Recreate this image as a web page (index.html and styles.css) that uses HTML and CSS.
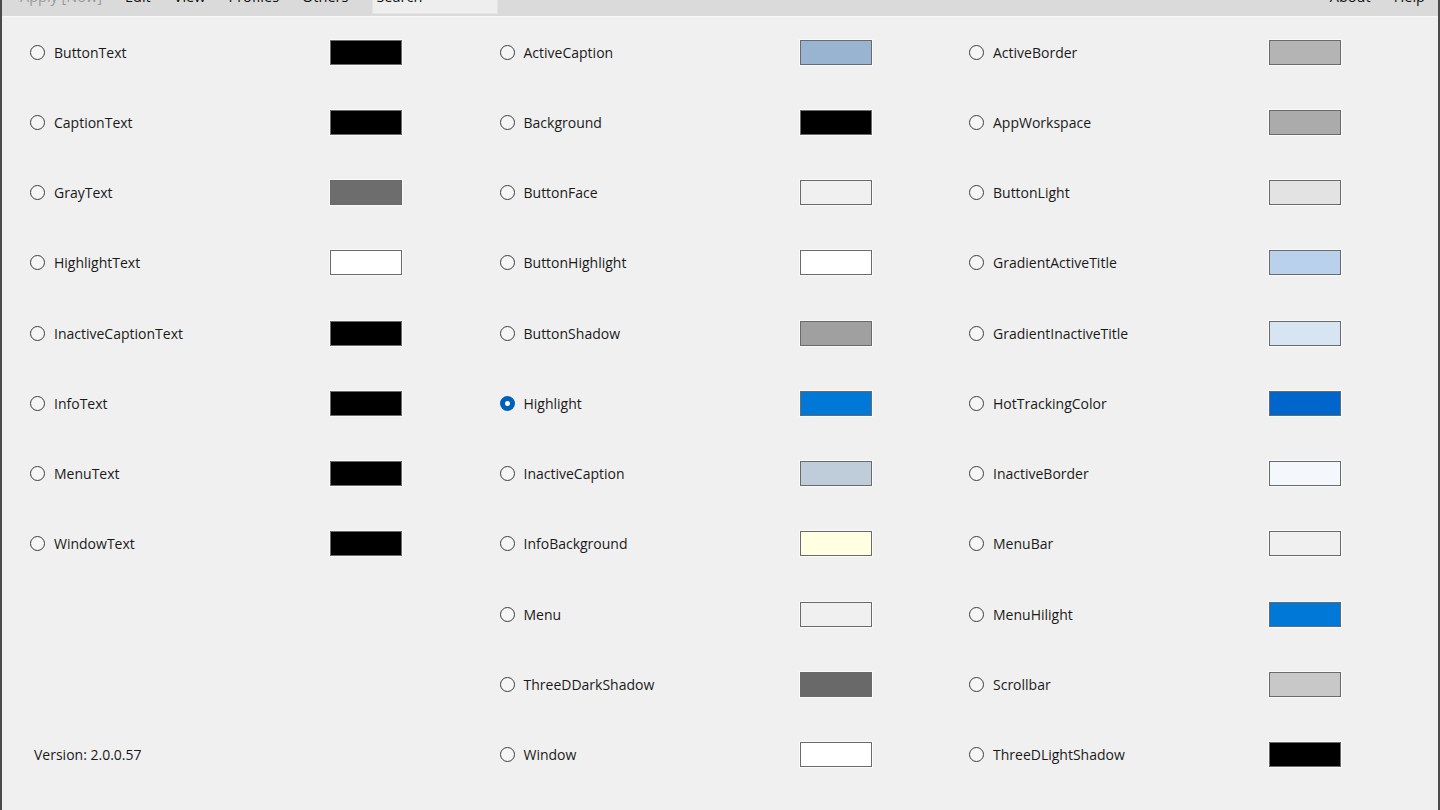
FILE: index.html
```html
<!DOCTYPE html>
<html lang="en">
<head>
    <meta charset="UTF-8">
    <title>System Colors</title>
    <link rel="stylesheet" href="styles.css">
</head>
<body>
    <div class="window">
        <div class="menubar">
            <div class="menu-item disabled">Apply [Now]</div>
            <div class="menu-item">Edit</div>
            <div class="menu-item">View</div>
            <div class="menu-item">Profiles</div>
            <div class="menu-item">Others</div>
            <div class="search"><span class="search-text">Search</span></div>
            <div class="menu-spacer"></div>
            <div class="menu-item">About</div>
            <div class="menu-item last">Help</div>
        </div>

        <div class="columns">
            <div class="column">
                <label class="row"><span class="radio"></span><span class="name">ButtonText</span><span class="swatch" style="background:#000000"></span></label>
                <label class="row"><span class="radio"></span><span class="name">CaptionText</span><span class="swatch" style="background:#000000"></span></label>
                <label class="row"><span class="radio"></span><span class="name">GrayText</span><span class="swatch" style="background:#6d6d6d"></span></label>
                <label class="row"><span class="radio"></span><span class="name">HighlightText</span><span class="swatch" style="background:#ffffff"></span></label>
                <label class="row"><span class="radio"></span><span class="name">InactiveCaptionText</span><span class="swatch" style="background:#000000"></span></label>
                <label class="row"><span class="radio"></span><span class="name">InfoText</span><span class="swatch" style="background:#000000"></span></label>
                <label class="row"><span class="radio"></span><span class="name">MenuText</span><span class="swatch" style="background:#000000"></span></label>
                <label class="row"><span class="radio"></span><span class="name">WindowText</span><span class="swatch" style="background:#000000"></span></label>
                <div class="version">Version: 2.0.0.57</div>
            </div>

            <div class="column">
                <label class="row"><span class="radio"></span><span class="name">ActiveCaption</span><span class="swatch" style="background:#99b4d1"></span></label>
                <label class="row"><span class="radio"></span><span class="name">Background</span><span class="swatch" style="background:#000000"></span></label>
                <label class="row"><span class="radio"></span><span class="name">ButtonFace</span><span class="swatch" style="background:#f0f0f0"></span></label>
                <label class="row"><span class="radio"></span><span class="name">ButtonHighlight</span><span class="swatch" style="background:#ffffff"></span></label>
                <label class="row"><span class="radio"></span><span class="name">ButtonShadow</span><span class="swatch" style="background:#a0a0a0"></span></label>
                <label class="row"><span class="radio checked"></span><span class="name">Highlight</span><span class="swatch" style="background:#0078d7"></span></label>
                <label class="row"><span class="radio"></span><span class="name">InactiveCaption</span><span class="swatch" style="background:#bfcddb"></span></label>
                <label class="row"><span class="radio"></span><span class="name">InfoBackground</span><span class="swatch" style="background:#ffffe1"></span></label>
                <label class="row"><span class="radio"></span><span class="name">Menu</span><span class="swatch" style="background:#f0f0f0"></span></label>
                <label class="row"><span class="radio"></span><span class="name">ThreeDDarkShadow</span><span class="swatch" style="background:#696969"></span></label>
                <label class="row"><span class="radio"></span><span class="name">Window</span><span class="swatch" style="background:#ffffff"></span></label>
            </div>

            <div class="column">
                <label class="row"><span class="radio"></span><span class="name">ActiveBorder</span><span class="swatch" style="background:#b4b4b4"></span></label>
                <label class="row"><span class="radio"></span><span class="name">AppWorkspace</span><span class="swatch" style="background:#ababab"></span></label>
                <label class="row"><span class="radio"></span><span class="name">ButtonLight</span><span class="swatch" style="background:#e3e3e3"></span></label>
                <label class="row"><span class="radio"></span><span class="name">GradientActiveTitle</span><span class="swatch" style="background:#b9d1ea"></span></label>
                <label class="row"><span class="radio"></span><span class="name">GradientInactiveTitle</span><span class="swatch" style="background:#d7e4f2"></span></label>
                <label class="row"><span class="radio"></span><span class="name">HotTrackingColor</span><span class="swatch" style="background:#0066cc"></span></label>
                <label class="row"><span class="radio"></span><span class="name">InactiveBorder</span><span class="swatch" style="background:#f4f7fc"></span></label>
                <label class="row"><span class="radio"></span><span class="name">MenuBar</span><span class="swatch" style="background:#f0f0f0"></span></label>
                <label class="row"><span class="radio"></span><span class="name">MenuHilight</span><span class="swatch" style="background:#0078d7"></span></label>
                <label class="row"><span class="radio"></span><span class="name">Scrollbar</span><span class="swatch" style="background:#c8c8c8"></span></label>
                <label class="row"><span class="radio"></span><span class="name">ThreeDLightShadow</span><span class="swatch" style="background:#000000"></span></label>
            </div>
        </div>
    </div>
</body>
</html>
```

FILE: styles.css
```css
html, body {
    margin: 0;
    padding: 0;
    height: 100%;
    background-color: #f0f0f0;
    font-family: 'Open Sans', 'Noto Sans', sans-serif;
    font-size: 14px;
    color: #1a1a1a;
    overflow: hidden;
}

.window {
    height: 810px;
    box-sizing: border-box;
    border-left: 2px solid #4a4a4a;
    border-right: 2px solid #4a4a4a;
    display: flex;
    flex-direction: column;
}

.menubar {
    height: 16px;
    flex: none;
    background-color: #dadada;
    border-bottom: 1px solid #f8f8f8;
    display: flex;
    align-items: flex-start;
    overflow: hidden;
    padding-left: 18px;
    padding-right: 13px;
}

.menu-item {
    margin-top: -13px;
    line-height: 20px;
    font-size: 14.5px;
    margin-right: 23px;
    color: #111;
    white-space: nowrap;
}

.menu-item.last {
    margin-right: 0;
}

.menu-item.disabled {
    color: #9a9a9a;
}

.menu-spacer {
    flex: 1;
}

.search {
    width: 121px;
    height: 13px;
    margin-left: 1px;
    background-color: #eeeeee;
    border: 1px solid #e4e4e4;
    border-top: none;
    padding-left: 3px;
    overflow: hidden;
}

.search-text {
    display: block;
    margin-top: -13px;
    line-height: 20px;
    font-size: 14.5px;
    color: #111;
}

.columns {
    display: grid;
    grid-template-columns: 469.5px 469.5px 1fr;
    padding-left: 28px;
}

.column {
    display: flex;
    flex-direction: column;
}

.row {
    height: 70.25px;
    display: flex;
    align-items: center;
    cursor: pointer;
}

.radio {
    width: 13px;
    height: 13px;
    border: 1px solid #3c3c3c;
    border-radius: 50%;
    background-color: #f6f6f6;
    flex: none;
}

.radio.checked {
    width: 5px;
    height: 5px;
    border: 5px solid #005fb8;
    background-color: #ffffff;
}

.name {
    margin-left: 9px;
    width: 276px;
    flex: none;
    white-space: nowrap;
}

.swatch {
    width: 70px;
    height: 23px;
    border: 1px solid #6a6a6a;
    box-shadow: 0 0 0 1px #fafafa;
    flex: none;
}

.version {
    margin-top: auto;
    height: 70.25px;
    display: flex;
    align-items: center;
    margin-left: 4px;
}
```
